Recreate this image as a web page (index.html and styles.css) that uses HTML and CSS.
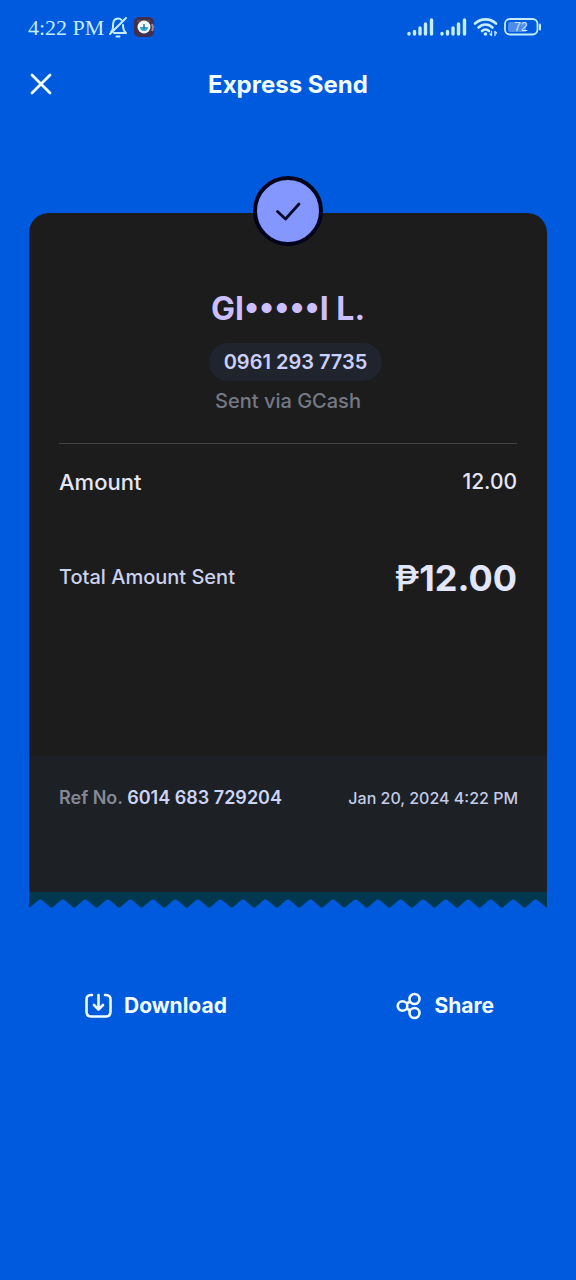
FILE: index.html
```html
<!DOCTYPE html>
<html lang="en">
<head>
<meta charset="utf-8">
<meta name="viewport" content="width=device-width, initial-scale=1">
<title>Express Send</title>
<link rel="stylesheet" href="styles.css">
</head>
<body>
<div class="status">
  <div class="status-group">
    <span class="clock">4:22 PM</span>
    <svg class="bell" width="20" height="22" viewBox="0 0 20 22" fill="none" stroke="currentColor" stroke-width="2" stroke-linecap="round" stroke-linejoin="round"><path d="M3 16c2-1.500 2-3.500 2-6.500C5 5 7 2.500 10 2.500c1.500 0 2.600.5 3.400 1.500M15 9c0 4 .8 6 3 8H6M18 2 2 18M8.500 20.500h3"/></svg>
    <svg class="app" width="20" height="20" viewBox="0 0 20 20"><rect width="20" height="20" rx="5" fill="#40304f"/><path d="M3 3h13v3H3z" fill="#60434c"/><path d="M18 7c1 2 1 5 0 7" stroke="#b68388" stroke-width="2" fill="none"/><circle cx="10" cy="10" r="6.500" fill="#eefaff"/><path d="M6 10h8a4 4 0 0 1-8 0z" fill="#33a4d9"/><path d="M10 7v5" stroke="#2873a8" stroke-width="1.500" fill="none"/></svg>
  </div>
  <div class="status-group indicators">
    <svg width="27" height="18" viewBox="0 0 27 18" stroke="currentColor" stroke-width="3.400" stroke-linecap="round"><path d="M2 15.500v.5M7.500 13.500V16M13 10v6M18.500 6v10M24.500 2v14"/></svg>
    <svg width="27" height="18" viewBox="0 0 27 18" stroke="currentColor" stroke-width="3.400" stroke-linecap="round"><path d="M2 15.500v.5M7.500 13.500V16M13 10v6M18.500 6v10M24.500 2v14"/></svg>
    <svg width="25" height="20" viewBox="0 0 25 20" fill="none" stroke="currentColor" stroke-width="2.600" stroke-linecap="round"><path d="M2 6.500c6-5.500 15-5.500 21 0M5.500 10.500c4-4 10-4 14 0M9 14c2-2 5-2 7 0"/><circle cx="12.500" cy="17" r="1.800" fill="currentColor" stroke="none"/><path d="M18.500 14.500v4m-1.500-1.500 1.500 1.500M22 18.500v-4m1.500 1.500L22 14.500" stroke-width="1.300"/></svg>
    <svg width="38" height="18" viewBox="0 0 38 18"><rect x="1" y="1" width="32.500" height="15.500" rx="5" fill="none" stroke="currentColor" stroke-width="1.800"/><path d="M6 4h16v10H6a2 2 0 0 1-2-2V6a2 2 0 0 1 2-2z" fill="#4f8cec"/><path d="M36 6.500v5" stroke="currentColor" stroke-width="2" stroke-linecap="round"/><text class="battery-level" x="17" y="13" text-anchor="middle">72</text></svg>
  </div>
</div>
<header class="header">
  <button class="close" aria-label="Close"><svg width="22" height="22" viewBox="0 0 22 22" fill="none" stroke="currentColor" stroke-width="2.800" stroke-linecap="round"><path d="M2 2l18 18M20 2 2 20"/></svg></button>
  <h1 class="title">Express Send</h1>
</header>
<main>
  <section class="receipt">
    <div class="badge"><svg width="26" height="20" viewBox="0 0 26 20" fill="none" stroke="#080b2b" stroke-width="2.800" stroke-linecap="round" stroke-linejoin="round"><path d="M2.500 10.500l8 7.500L24 3"/></svg></div>
    <div class="details">
      <div class="recipient">
        <h2 class="name">GI•••••I L.</h2>
        <div class="phone">0961 293 7735</div>
        <p class="via">Sent via GCash</p>
      </div>
      <dl class="amounts">
        <div class="row"><dt class="label">Amount</dt><dd>12.00</dd></div>
        <div class="row total"><dt>Total Amount Sent</dt><dd class="sum"><span class="peso">₱</span>12.00</dd></div>
      </dl>
    </div>
    <div class="reference">
      <p class="ref">Ref No. <strong>6014 683 729204</strong></p>
      <time class="date" datetime="2024-01-20T16:22">Jan 20, 2024 4:22 PM</time>
    </div>
    <svg class="edge" height="17" viewBox="0 0 517 17" preserveAspectRatio="none"><defs><pattern id="tooth" width="22.478" height="17" patternUnits="userSpaceOnUse"><path d="M0 0H22.478V16L21 15 13.500 8.500Q11.200 6.500 9 8.500L1.500 15 0 16z" fill="#02384f"/></pattern></defs><rect width="517" height="17" fill="url(#tooth)"/></svg>
  </section>
  <nav class="actions">
    <button class="action"><svg width="27" height="26" viewBox="0 0 27 26" fill="none" stroke="currentColor" stroke-width="2.600" stroke-linecap="round" stroke-linejoin="round"><path d="M7 2H6Q1.500 2 1.500 6.500v12Q1.500 23.500 6 23.500h15q4.500 0 4.500-5v-12Q25.500 2 21 2h-1M13.500 2v14M9 12l4.500 4.500L18 12"/></svg>Download</button>
    <button class="action"><svg width="26" height="28" viewBox="0 0 26 28" fill="none" stroke="currentColor" stroke-width="2.600"><circle cx="6.500" cy="14" r="4.800"/><circle cx="18.500" cy="7" r="5"/><circle cx="18.500" cy="21" r="5"/><path d="M10.500 11.500l3.700-2M10.500 16.500l3.700 2"/></svg>Share</button>
  </nav>
</main>
</body>
</html>
```
FILE: styles.css
```css
* { box-sizing: border-box; }
body {
  margin: 0;
  min-height: 100vh;
  background: #005add;
  color: #f0fbff;
  font-family: Inter, "Noto Sans", sans-serif;
}
h1, h2, p, dl, dd { margin: 0; }
svg { display: block; flex: none; }
button {
  border: 0;
  padding: 0;
  background: none;
  color: inherit;
  font: inherit;
  cursor: pointer;
}
.status {
  display: flex;
  justify-content: space-between;
  align-items: center;
  height: 54px;
  padding: 0 34px 0 28px;
  color: #c4edff;
}
.status-group { display: flex; align-items: center; gap: 6px; }
.clock { padding-top: 2px; font: 22px/28px "Liberation Serif", serif; }
.bell { margin-left: -2px; }
.battery-level { fill: #c4edff; font: 12px "Liberation Sans", sans-serif; }
.header {
  display: grid;
  grid-template-columns: 22px 1fr 22px;
  align-items: center;
  height: 60px;
  padding: 0 30px;
}
.title {
  padding-top: 2px;
  font-size: 24px;
  line-height: 32px;
  font-weight: 700;
  text-align: center;
}
.receipt {
  position: relative;
  margin: 99px 29px 0;
}
.badge {
  position: absolute;
  top: -37px;
  left: 50%;
  width: 70px;
  height: 70px;
  margin-left: -35px;
  display: grid;
  place-items: center;
  border: 4px solid #00031a;
  border-radius: 50%;
  background: #8496ff;
}
.details {
  padding: 76px 30px 158px;
  border-radius: 20px 20px 0 0;
  background: #1c1c1c;
}
.recipient {
  display: flex;
  flex-direction: column;
  align-items: center;
  padding-bottom: 26px;
  border-bottom: 1px solid #444;
}
.name {
  color: #cdbfff;
  font-size: 32px;
  line-height: 40px;
  font-weight: 700;
}
.phone {
  margin: 14px 0 4px 15px;
  padding: 4px 15px;
  border-radius: 19px;
  background: #20242d;
  color: #ccd0ff;
  font-size: 20px;
  line-height: 30px;
  font-weight: 600;
}
.via {
  color: #747985;
  font-size: 20px;
  line-height: 32px;
  font-weight: 500;
}
.amounts {
  display: flex;
  flex-direction: column;
  gap: 58px;
  padding-top: 22px;
  color: #e4e6f5;
  font-size: 21px;
  line-height: 32px;
  font-weight: 500;
}
.label { font-size: 22px; }
.row { display: flex; justify-content: space-between; align-items: center; }
.total { color: #ccd2ee; font-size: 20px; }
.sum {
  padding-top: 2px;
  color: #e2e6fb;
  font-size: 36px;
  line-height: 40px;
  font-weight: 700;
}
.peso { font-weight: 500; }
.reference {
  display: flex;
  justify-content: space-between;
  align-items: center;
  padding: 30px 29px 82px 30px;
  background: #1d2025;
  line-height: 24px;
}
.ref { color: #858996; font-size: 18px; font-weight: 600; }
.ref strong { color: #ccd4f7; font-weight: 600; }
.date { color: #c4cce6; font-size: 16px; font-weight: 500; }
.edge { width: 100%; }
.actions {
  display: flex;
  justify-content: space-between;
  padding: 81px 82px 40px 85px;
}
.action {
  display: flex;
  align-items: center;
  gap: 12px;
  font-size: 21px;
  line-height: 32px;
  font-weight: 700;
}
```
